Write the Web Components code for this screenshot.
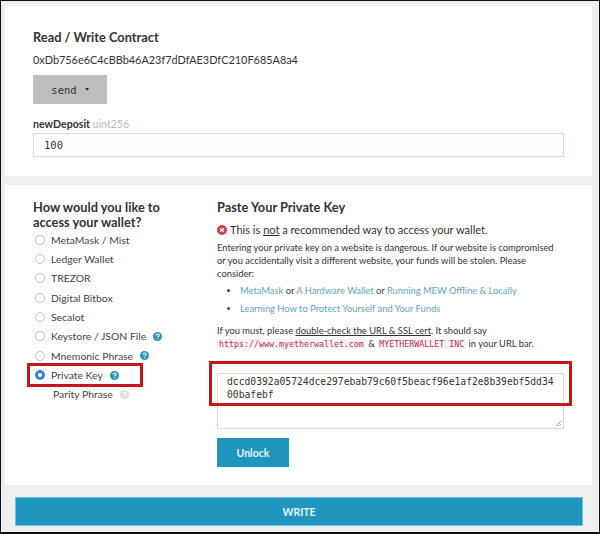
<!DOCTYPE html>
<html>
<head>
<meta charset="utf-8">
<style>
  html, body { margin: 0; height: 100%; }
  body { font-family: Lato, sans-serif; color: #333; }
</style>
</head>
<body>
<mew-shell>
  <contract-card></contract-card>
  <access-card></access-card>
  <write-bar></write-bar>
</mew-shell>

<script>
const helpIcon = (color) => `
  <svg class="help" width="9" height="9" viewBox="0 0 11 11">
    <circle cx="5.5" cy="5.5" r="5.5" fill="${color}"/>
    <path d="M3.7 4.3c0-1.1.8-1.8 1.9-1.8s1.8.7 1.8 1.6c0 1.3-1.7 1.3-1.7 2.4" fill="none" stroke="#fff" stroke-width="1.4"/>
    <circle cx="5.7" cy="8.4" r=".85" fill="#fff"/>
  </svg>`;

class MewShell extends HTMLElement {
  constructor() {
    super();
    this.attachShadow({ mode: 'open' }).innerHTML = `
      <style>
        :host {
          display: flex;
          flex-direction: column;
          box-sizing: border-box;
          width: 600px;
          height: 534px;
          background: #efefef;
          border: 1px solid #111;
          border-bottom-width: 2px;
          padding: 5px 7px 5px 4px;
          overflow: hidden;
        }
      </style>
      <slot></slot>
    `;
  }
}

class ContractCard extends HTMLElement {
  constructor() {
    super();
    this.attachShadow({ mode: 'open' }).innerHTML = `
      <style>
        :host {
          display: block;
          box-sizing: border-box;
          height: 170px;
          background: #fff;
          padding: 23px 28px 0;
        }
        h2 { margin: 0; font-size: 12.8px; line-height: 16px; font-weight: 700; color: #333; }
        .addr { margin-top: 7px; font-size: 10.9px; line-height: 16px; color: #333; }
        .send {
          box-sizing: border-box;
          width: 74px;
          height: 29px;
          margin-top: 7px;
          display: flex;
          align-items: center;
          justify-content: center;
          gap: 8px;
          background: #bdbdbd;
          font: 10.5px "DejaVu Sans Mono", monospace;
          color: #333;
        }
        .caret {
          width: 0; height: 0;
          border-left: 2.5px solid transparent;
          border-right: 2.5px solid transparent;
          border-top: 3px solid #333;
        }
        label { display: block; margin-top: 12px; font-size: 10.6px; line-height: 16px; font-weight: 700; color: #333; }
        label span { font-weight: 400; color: #bbb; }
        .field {
          box-sizing: border-box;
          height: 24px;
          margin-top: 1px;
          padding: 0 10px;
          width: 531px;
          border: 1px solid #cfe0cf;
          background: #fdfffd;
          font: 10.5px/22px "DejaVu Sans Mono", monospace;
          color: #333;
        }
      </style>
      <h2>Read / Write Contract</h2>
      <div class="addr">0xDb756e6C4cBBb46A23f7dDfAE3DfC210F685A8a4</div>
      <div class="send">send <i class="caret"></i></div>
      <label>newDeposit <span>uint256</span></label>
      <div class="field">100</div>
    `;
  }
}

class WalletOption extends HTMLElement {
  constructor() {
    super();
    this.attachShadow({ mode: 'open' });
  }
  connectedCallback() {
    const checked = this.hasAttribute('checked');
    const plain = this.hasAttribute('plain');
    this.shadowRoot.innerHTML = `
      <style>
        :host { display: flex; align-items: center; height: 19.35px; gap: 6px; font-size: 10.4px; color: #444; white-space: nowrap; }
        :host([plain]) { padding-left: 20px; }
        .dot {
          box-sizing: border-box;
          width: 10px; height: 10px;
          border-radius: 50%;
          margin-left: 2px;
          background: #fff;
          border: 1px solid #c4c4c4;
        }
        .dot.on { border: 3px solid #3b7fdc; }
        .tip { display: inline-flex; margin-left: 1px; }
      </style>
      ${plain ? '' : `<span class="dot ${checked ? 'on' : ''}"></span>`}
      <span><slot></slot></span>
      ${this.hasAttribute('help') ? `<span class="tip">${helpIcon(this.getAttribute('help'))}</span>` : ''}
    `;
  }
}

class AccessMenu extends HTMLElement {
  constructor() {
    super();
    this.attachShadow({ mode: 'open' }).innerHTML = `
      <style>
        :host { display: block; width: 184px; flex: none; position: relative; }
        h2 { margin: 0; width: 140px; font-size: 12.8px; line-height: 15px; font-weight: 700; color: #333; }
        .mark {
          position: absolute;
          left: -6px;
          top: 163px;
          width: 116px;
          height: 24px;
          box-sizing: border-box;
          border: 3px solid #c4161c;
        }
      </style>
      <h2>How would you like to access your wallet?</h2>
      <slot></slot>
      <div class="mark"></div>
    `;
  }
}

class KeyPanel extends HTMLElement {
  constructor() {
    super();
    this.attachShadow({ mode: 'open' }).innerHTML = `
      <style>
        :host { display: block; flex: 1; min-width: 0; position: relative; margin-top: -1px; }
        h2 { margin: 0; font-size: 12.8px; line-height: 16px; font-weight: 700; color: #333; }
        .warn { display: flex; align-items: center; gap: 3px; margin-top: 7px; font-size: 11.05px; line-height: 16px; color: #333; }
        .warn u { text-underline-offset: 1px; }
        p { margin: 3px 0 0; width: 345px; font-size: 9.35px; line-height: 13px; color: #333; }
        ul { margin: 2px 0 0; padding: 0 0 0 23px; font-size: 9.35px; line-height: 18px; color: #444; }
        ul + p { margin-top: 6px; }
        a { color: #5fa6b8; text-decoration: none; }
        code { font: 8.3px "DejaVu Sans Mono", monospace; color: #b5315e; background: #f9f2f4; padding: 0 2px; }
        .box {
          box-sizing: border-box;
          width: 347px;
          height: 56px;
          margin-top: 23px;
          padding: 1px 7px 5px 9px;
          border: 1px solid #cfe0cf;
          background: #fff;
          font: 9.7px/13px "DejaVu Sans Mono", monospace;
          color: #333;
          word-break: break-all;
          position: relative;
        }
        .grip { position: absolute; right: 1px; bottom: 1px; }
        .mark {
          position: absolute;
          left: -8px;
          top: 162px;
          width: 363px;
          height: 45px;
          box-sizing: border-box;
          border: 3px solid #c4161c;
        }
        .unlock {
          box-sizing: border-box;
          width: 72px; height: 29px;
          margin-top: 9px;
          background: #1f96bf;
          color: #e4f4f8;
          font-size: 10.5px;
          font-weight: 700;
          display: flex; align-items: center; justify-content: center;
        }
      </style>
      <h2>Paste Your Private Key</h2>
      <div class="warn">
        <svg width="10" height="10" viewBox="0 0 11 11">
          <circle cx="5.5" cy="5.5" r="5.5" fill="#c9454a"/>
          <path d="M3.5 3.5l4 4M7.5 3.5l-4 4" stroke="#fff" stroke-width="1.4"/>
        </svg>
        <span>This is <u>not</u> a recommended way to access your wallet.</span>
      </div>
      <p>Entering your private key on a website is dangerous. If our website is compromised or you accidentally visit a different website, your funds will be stolen. Please consider:</p>
      <ul>
        <li><a>MetaMask</a> or <a>A Hardware Wallet</a> or <a>Running MEW Offline &amp; Locally</a></li>
        <li><a>Learning How to Protect Yourself and Your Funds</a></li>
      </ul>
      <p>If you must, please <u>double-check the URL &amp; SSL cert</u>. It should say<br>
      <code>https://www.myetherwallet.com</code> &amp; <code>MYETHERWALLET INC</code> in your URL bar.</p>
      <div class="box">dccd0392a05724dce297ebab79c60f5beacf96e1af2e8b39ebf5dd3400bafebf<svg class="grip" width="7" height="7" viewBox="0 0 7 7"><path d="M1 6l5-5M4 6l2-2" stroke="#999" stroke-width=".8"/></svg></div>
      <div class="unlock">Unlock</div>
      <div class="mark"></div>
    `;
  }
}

class AccessCard extends HTMLElement {
  constructor() {
    super();
    this.attachShadow({ mode: 'open' }).innerHTML = `
      <style>
        :host {
          display: flex;
          box-sizing: border-box;
          height: 300px;
          margin-top: 9px;
          background: #fff;
          padding: 15px 0 0 28px;
        }
      </style>
      <access-menu>
        <wallet-option>MetaMask / Mist</wallet-option>
        <wallet-option>Ledger Wallet</wallet-option>
        <wallet-option>TREZOR</wallet-option>
        <wallet-option>Digital Bitbox</wallet-option>
        <wallet-option>Secalot</wallet-option>
        <wallet-option help="#2e93bd">Keystore / JSON File</wallet-option>
        <wallet-option help="#2e93bd">Mnemonic Phrase</wallet-option>
        <wallet-option checked help="#2e93bd">Private Key</wallet-option>
        <wallet-option plain help="#dcdcdc">Parity Phrase</wallet-option>
      </access-menu>
      <key-panel></key-panel>
    `;
  }
}

class WriteBar extends HTMLElement {
  constructor() {
    super();
    this.attachShadow({ mode: 'open' }).innerHTML = `
      <style>
        :host {
          display: flex;
          align-items: center;
          justify-content: center;
          box-sizing: border-box;
          height: 29px;
          margin: 12px 0 0 10px;
          width: 568px;
          background: #1f96bf;
          border: 1px solid #6cc3dc;
          color: #e4f4f8;
          font-size: 10.5px;
          font-weight: 700;
        }
      </style>
      WRITE
    `;
  }
}

customElements.define('mew-shell', MewShell);
customElements.define('contract-card', ContractCard);
customElements.define('wallet-option', WalletOption);
customElements.define('access-menu', AccessMenu);
customElements.define('key-panel', KeyPanel);
customElements.define('access-card', AccessCard);
customElements.define('write-bar', WriteBar);
</script>
</body>
</html>
